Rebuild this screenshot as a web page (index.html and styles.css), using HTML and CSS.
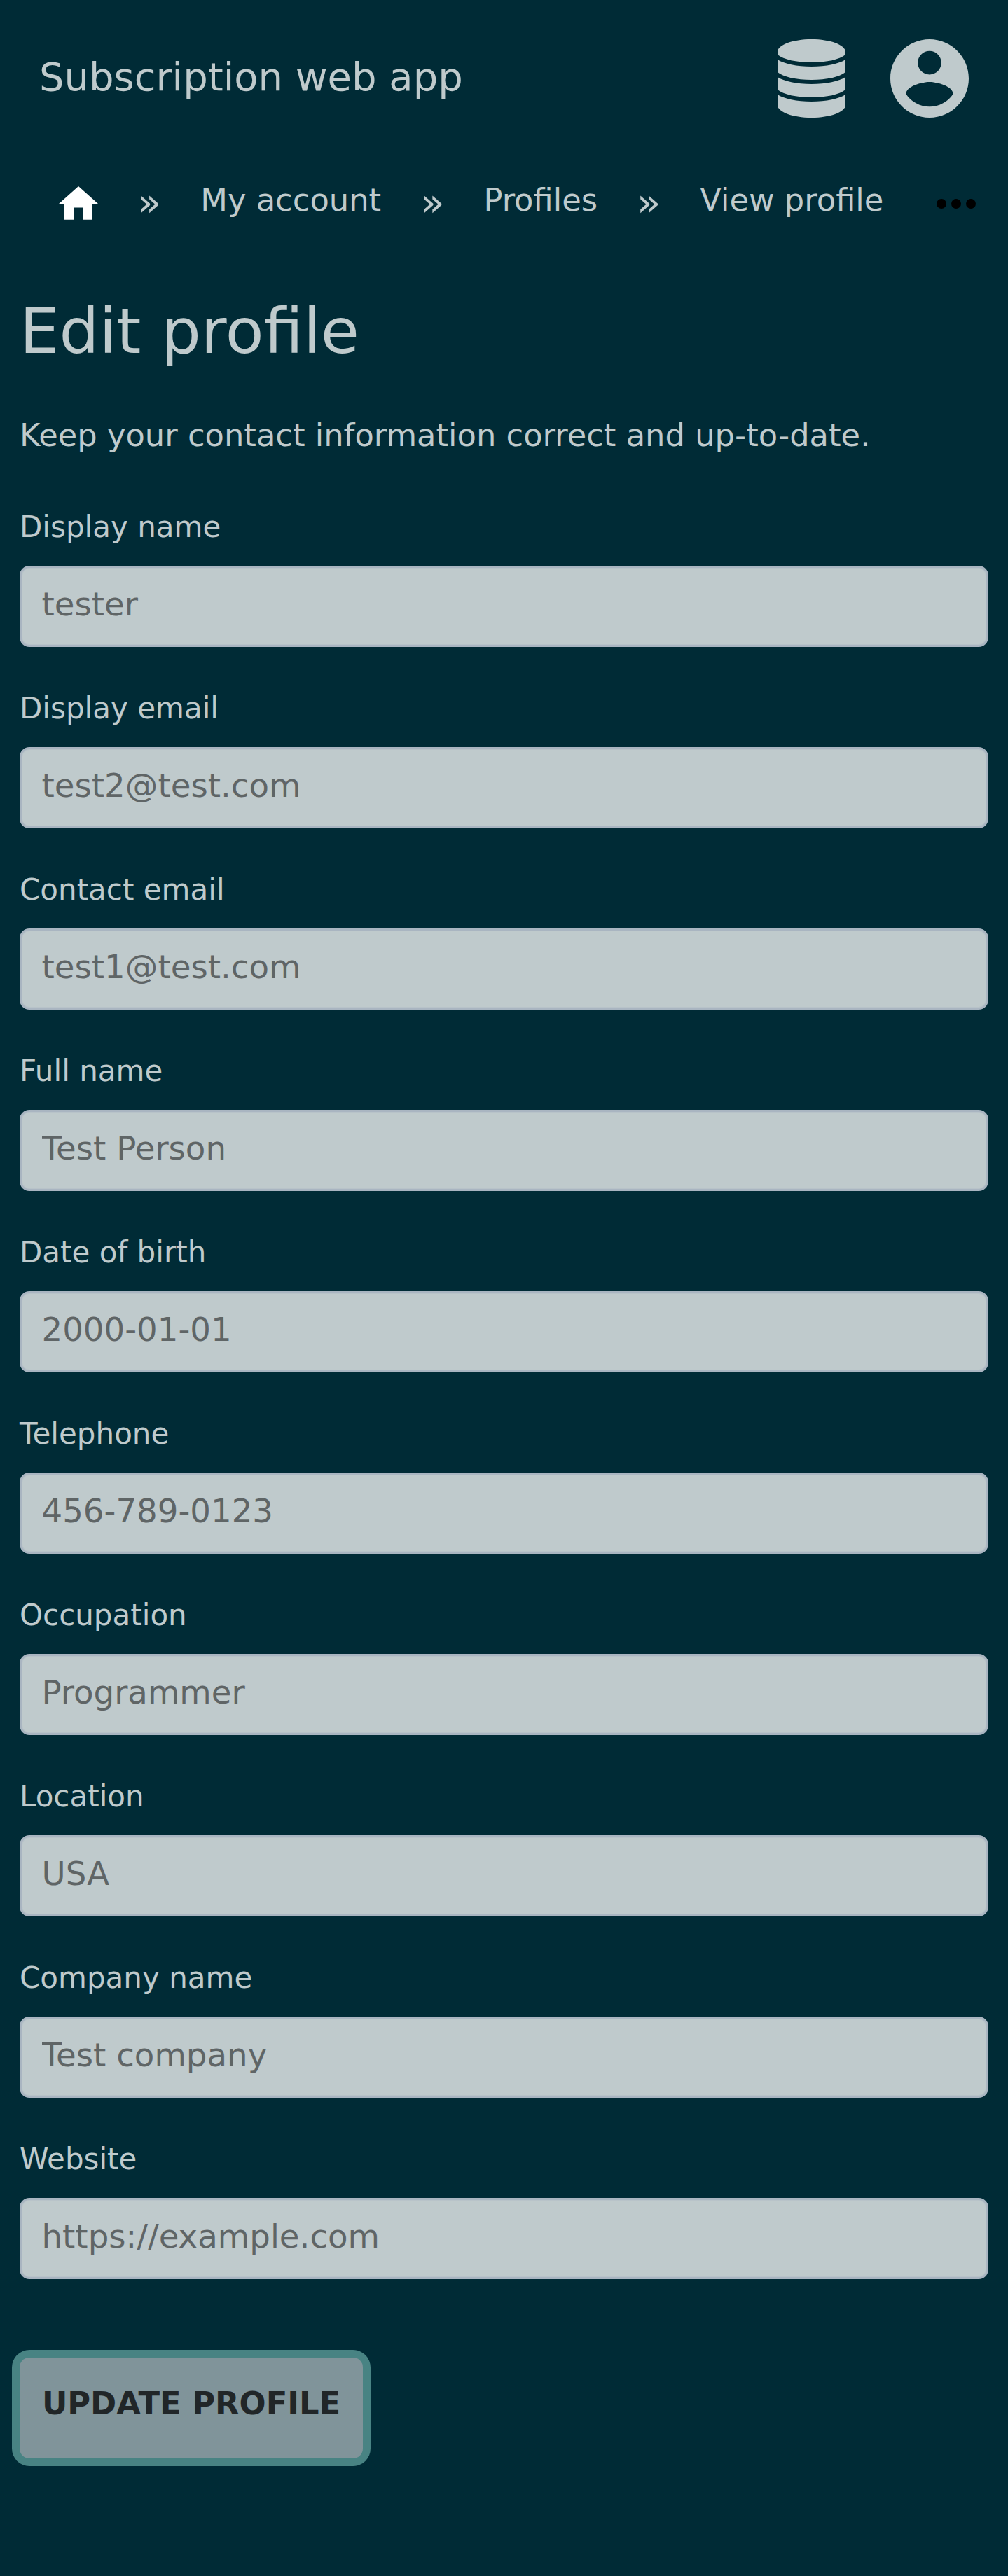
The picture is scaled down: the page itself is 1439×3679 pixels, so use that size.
FILE: index.html
```html
<!DOCTYPE html>
<html lang="en">
<head>
<meta charset="utf-8">
<title>Edit profile</title>
<link rel="stylesheet" href="styles.css">
</head>
<body>
<header class="header">
  <a class="brand">Subscription web app</a>
  <nav class="actions">
    <svg class="icon-db" viewBox="0 0 98 112" preserveAspectRatio="none"><path d="M0 18C0 8 22 0 49 0s49 8 49 18v4c-9 7-27 11-49 11S9 29 0 22zM0 29c9 6 28 10 49 10s40-4 49-10v18c-9 7-27 11-49 11S9 54 0 47zM0 54c9 6 28 10 49 10s40-4 49-10v18c-9 7-27 11-49 11S9 79 0 72zM0 79c9 6 28 10 49 10s40-4 49-10v15c0 10-22 18-49 18S0 104 0 94z"/></svg>
    <svg class="icon-user" viewBox="2 2 20 20"><path d="M12 2C6.480 2 2 6.480 2 12s4.480 10 10 10 10-4.480 10-10S17.520 2 12 2zm0 3c1.660 0 3 1.340 3 3s-1.340 3-3 3-3-1.340-3-3 1.340-3 3-3zm0 14.200c-2.500 0-4.710-1.280-6-3.220.030-1.990 4-3.080 6-3.080 1.990 0 5.970 1.090 6 3.080-1.290 1.940-3.500 3.220-6 3.220z"/></svg>
  </nav>
</header>
<nav class="crumbs">
  <svg class="icon-home" viewBox="0 0 56 48"><path d="M28 0L56 25H48V47.700H34V30.500H22V47.700H8V25H0z"/></svg>
  <span class="sep">»</span>
  <a class="crumb">My account</a>
  <span class="sep">»</span>
  <a class="crumb">Profiles</a>
  <span class="sep">»</span>
  <a class="crumb">View profile</a>
  <svg class="icon-more" viewBox="0 0 56 14"><circle cx="7" cy="7" r="7"/><circle cx="28" cy="7" r="7"/><circle cx="49" cy="7" r="7"/></svg>
</nav>
<main class="main">
  <h1 class="title">Edit profile</h1>
  <p class="lead">Keep your contact information correct and up-to-date.</p>
  <form class="form">
    <label class="field"><span class="label">Display name</span><input class="input" placeholder="tester"></label>
    <label class="field"><span class="label">Display email</span><input class="input" placeholder="test2@test.com"></label>
    <label class="field"><span class="label">Contact email</span><input class="input" placeholder="test1@test.com"></label>
    <label class="field"><span class="label">Full name</span><input class="input" placeholder="Test Person"></label>
    <label class="field"><span class="label">Date of birth</span><input class="input" placeholder="2000-01-01"></label>
    <label class="field"><span class="label">Telephone</span><input class="input" placeholder="456-789-0123"></label>
    <label class="field"><span class="label">Occupation</span><input class="input" placeholder="Programmer"></label>
    <label class="field"><span class="label">Location</span><input class="input" placeholder="USA"></label>
    <label class="field"><span class="label">Company name</span><input class="input" placeholder="Test company"></label>
    <label class="field"><span class="label">Website</span><input class="input" placeholder="https://example.com"></label>
    <button class="submit" type="button">UPDATE PROFILE</button>
  </form>
</main>
</body>
</html>
```
FILE: styles.css
```css
* { box-sizing: border-box; }
body {
  margin: 0;
  min-height: 3679px;
  background: #002b36;
  color: #bfcacc;
  font-family: "DejaVu Sans", sans-serif;
  font-size: 44.8px;
}
svg { display: block; flex: none; }
.header {
  display: flex;
  justify-content: space-between;
  align-items: center;
  height: 224px;
  padding: 0 56px;
}
.brand { margin-top: -5px; font-size: 56px; }
.actions { display: flex; gap: 64px; }
.icon-db { width: 97px; height: 112px; fill: #bfcacc; }
.icon-user { width: 112px; height: 112px; fill: #bfcacc; }
.crumbs {
  display: flex;
  align-items: center;
  height: 126px;
  padding: 0 46px 0 84px;
}
.icon-home { width: 56px; height: 48px; margin: 6px 56px 0 0; fill: #fff; }
.crumb { margin: -3px 56px 0; line-height: 52px; }
.sep { font-size: 56px; line-height: 64px; margin-top: 4px; }
.icon-more { width: 56px; height: 14px; margin: 7px 0 0 auto; fill: #000; }
.main { padding: 0 28px; }
.title { margin: 70px 0 0; font-size: 89.6px; font-weight: 400; line-height: 106px; }
.lead { margin: 69px 0 0; line-height: 53px; }
.form { margin-top: 80px; }
.field { display: block; height: 259px; }
.label { display: block; height: 80.400px; font-size: 42px; line-height: 49px; }
.input {
  display: block;
  width: 100%;
  height: 115.600px;
  padding: 0 28.500px 6px;
  border: 3px solid #a9b5c1;
  border-radius: 14px;
  background: #bfcacc;
  box-shadow: inset 0 0 0 1px #b8c3c9;
  font: 46.667px "DejaVu Sans", sans-serif;
}
.input::placeholder { color: #5f6566; opacity: 1; }
.submit {
  display: block;
  width: 490px;
  height: 144px;
  margin-top: 49px;
  padding: 0 0 14px;
  border: 0;
  border-radius: 14px;
  background: #80949a;
  box-shadow: 0 0 0 11px #488383;
  color: #212628;
  font: bold 44.8px "DejaVu Sans", sans-serif;
}
```
